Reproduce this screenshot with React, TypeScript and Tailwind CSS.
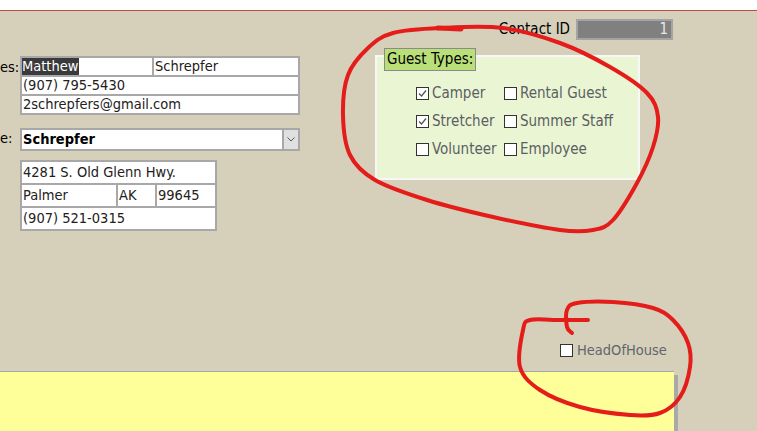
import React from "react";

type Pt = [number, number];

// Catmull-Rom through the points, emitted as cubic beziers
function smoothPath(pts: Pt[], closed = false) {
  const p = closed ? [pts[pts.length - 1], ...pts, pts[0], pts[1]] : [pts[0], ...pts, pts[pts.length - 1]];
  let d = `M ${p[1][0]},${p[1][1]}`;
  for (let i = 1; i < p.length - 2; i++) {
    const [x0, y0] = p[i - 1];
    const [x1, y1] = p[i];
    const [x2, y2] = p[i + 1];
    const [x3, y3] = p[i + 2];
    const c1x = x1 + (x2 - x0) / 6;
    const c1y = y1 + (y2 - y0) / 6;
    const c2x = x2 - (x3 - x1) / 6;
    const c2y = y2 - (y3 - y1) / 6;
    d += ` C ${c1x.toFixed(1)},${c1y.toFixed(1)} ${c2x.toFixed(1)},${c2y.toFixed(1)} ${x2},${y2}`;
  }
  return d;
}

const loopTypes: Pt[] = [
  [503, 28], [560, 43], [610, 67], [647, 93], [658, 117], [653, 147], [637, 183],
  [613, 220], [593, 230], [560, 230], [493, 217], [427, 200], [375, 180], [350, 155],
  [343, 115], [348, 75], [368, 48], [393, 33], [440, 28],
];

const loopHead: Pt[] = [
  [572, 333], [567, 327], [567, 310], [577, 303], [613, 302], [653, 308], [673, 320],
  [688, 343], [690, 367], [680, 397], [660, 413], [630, 415], [580, 407], [540, 390],
  [520, 367], [523, 330], [530, 320], [560, 320], [588, 320],
];

const font = "font-['DejaVu_Sans_Condensed','DejaVu_Sans',sans-serif]";

function Check({ label, checked }: { label: string; checked?: boolean }) {
  return (
    <div className="flex items-center gap-[3px] h-[28px]">
      <span className="w-[13px] h-[13px] border border-[#333] bg-white flex items-center justify-center">
        {checked && (
          <svg width="11" height="11" viewBox="0 0 11 11">
            <path d="M2 5.5 L4.5 8 L9 2.5" fill="none" stroke="#555" strokeWidth="1.3" />
          </svg>
        )}
      </span>
      <span className="text-[15px] text-[#5b5f63]">{label}</span>
    </div>
  );
}

export default function App() {
  return (
    <div className={`w-[757px] h-[431px] overflow-hidden flex flex-col relative ${font}`}>
      <div className="h-[11px] bg-white border-b border-[#c24a4a]" />

      <div className="flex-1 flex flex-col bg-[#d6d0bb]">
        {/* record id */}
        <div className="flex justify-end items-center gap-[6px] pr-[84px] pt-[7px]">
          <span className="text-[15px] text-black">Contact ID</span>
          <div className="w-[97px] h-[21px] bg-[#808080] border-2 border-[#a4a4a4] flex items-center justify-end pr-[3px] text-[15px] text-[#e8e8e8]">
            1
          </div>
        </div>

        <div className="flex">
          {/* contact fields */}
          <div className="w-[300px] mt-[15px] flex flex-col text-[14.5px] text-[#24201a]">
            <div className="flex">
              <div className="w-[20px] pt-[1px] whitespace-nowrap text-black">es:</div>
              <div className="w-[280px] bg-[#a8a8a8] p-[2px] flex flex-col gap-[2px]">
                <div className="flex gap-[2px] h-[17px]">
                  <div className="w-[130px] bg-white flex">
                    <span className="bg-[#3a3a3a] text-white h-full flex items-center pr-[1px] leading-none">Matthew</span>
                  </div>
                  <div className="flex-1 bg-white px-[1px] flex items-center leading-none">Schrepfer</div>
                </div>
                <div className="h-[17px] bg-white px-[1px] flex items-center leading-none">(907) 795-5430</div>
                <div className="h-[17px] bg-white px-[1px] flex items-center leading-none">2schrepfers@gmail.com</div>
              </div>
            </div>

            <div className="flex mt-[13px]">
              <div className="w-[20px] flex items-center whitespace-nowrap text-black">e:</div>
              <div className="w-[280px] h-[23px] border-2 border-[#a8a8a8] bg-white flex">
                <div className="flex-1 px-[1px] flex items-center font-bold text-black leading-none">Schrepfer</div>
                <div className="w-[16px] bg-[#e0e0e0] border-l-2 border-[#a8a8a8] flex items-center justify-center">
                  <svg width="8" height="5" viewBox="0 0 8 5">
                    <path d="M0.5 0.5 L4 4 L7.5 0.5" fill="none" stroke="#555" strokeWidth="1" />
                  </svg>
                </div>
              </div>
            </div>

            <div className="ml-[20px] mt-[9px] w-[197px] bg-[#a8a8a8] p-[2px] flex flex-col gap-[2px]">
              <div className="h-[21px] bg-white px-[1px] flex items-center leading-none">4281 S. Old Glenn Hwy.</div>
              <div className="h-[21px] flex gap-[2px]">
                <div className="w-[94px] bg-white px-[1px] flex items-center leading-none">Palmer</div>
                <div className="w-[37px] bg-white px-[1px] flex items-center leading-none">AK</div>
                <div className="flex-1 bg-white px-[1px] flex items-center leading-none">99645</div>
              </div>
              <div className="h-[21px] bg-white px-[1px] flex items-center leading-none">(907) 521-0315</div>
            </div>
          </div>

          {/* guest type options */}
          <div className="ml-[75px] mt-[14px] relative">
            <div className="w-[265px] h-[125px] bg-[#eaf5d4] border-2 border-[#f7f7f7] pl-[39px] pt-[23px] grid grid-cols-[88px_1fr] content-start">
              <Check label="Camper" checked />
              <Check label="Rental Guest" />
              <Check label="Stretcher" checked />
              <Check label="Summer Staff" />
              <Check label="Volunteer" />
              <Check label="Employee" />
            </div>
            <div className="absolute left-[9px] -top-[7px] h-[23px] px-[2px] bg-[#b9df79] border border-[#8a8a8a] flex items-center text-[15px] text-black">
              Guest Types:
            </div>
          </div>
        </div>

        <div className="mt-auto mb-[12px] ml-[560px] flex items-center gap-[4px] h-[17px]">
          <span className="w-[13px] h-[13px] border border-[#333] bg-white" />
          <span className="text-[14.5px] text-[#5f666c]">HeadOfHouse</span>
        </div>

        <div className="w-[674px] h-[60px] bg-[#ffff99] border-t border-[#a6a6a6] shadow-[4px_4px_0_#a9a9a9]" />
      </div>

      <svg className="absolute inset-0 pointer-events-none" width="757" height="431">
        <g fill="none" stroke="#e41d1a" strokeWidth="4" strokeLinecap="round" strokeLinejoin="round">
          <path d={smoothPath(loopTypes, true)} />
          <path d="M 438,28 L 461,29" strokeWidth="5" />
          <path d={smoothPath(loopHead)} />
        </g>
      </svg>
    </div>
  );
}
